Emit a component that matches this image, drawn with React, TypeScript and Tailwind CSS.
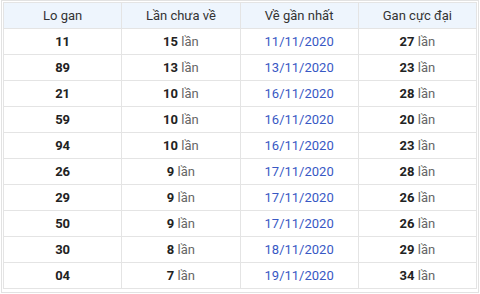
const rows = [
  { lo: "11", chua: 15, date: "11/11/2020", max: 27 },
  { lo: "89", chua: 13, date: "13/11/2020", max: 23 },
  { lo: "21", chua: 10, date: "16/11/2020", max: 28 },
  { lo: "59", chua: 10, date: "16/11/2020", max: 20 },
  { lo: "94", chua: 10, date: "16/11/2020", max: 23 },
  { lo: "26", chua: 9, date: "17/11/2020", max: 28 },
  { lo: "29", chua: 9, date: "17/11/2020", max: 26 },
  { lo: "50", chua: 9, date: "17/11/2020", max: 26 },
  { lo: "30", chua: 8, date: "18/11/2020", max: 29 },
  { lo: "04", chua: 7, date: "19/11/2020", max: 34 },
];

const Lan = ({ n }: { n: number }) => (
  <>
    <span className="font-bold text-[#222]">{n}</span>{" "}
    <span className="text-[#666]">lần</span>
  </>
);

export default function App() {
  return (
    <div className="w-[480px] h-[294px] bg-white overflow-hidden font-['Roboto',sans-serif] text-[13px]">
      <div className="ml-[1px] w-[478px] h-[293px] border border-[#e2e2e2] px-[1px] pt-[1px]">
        <table className="w-[474px] border-collapse table-fixed text-center">
          <thead>
            <tr className="h-[26px] bg-[#eef5fd] text-[#333]">
              <th className="font-normal border border-[#e4e4e4]">Lo gan</th>
              <th className="font-normal border border-[#e4e4e4]">Lần chưa về</th>
              <th className="font-normal border border-[#e4e4e4]">Về gần nhất</th>
              <th className="font-normal border border-[#e4e4e4]">Gan cực đại</th>
            </tr>
          </thead>
          <tbody>
            {rows.map((r) => (
              <tr key={r.lo} className="h-[26px]">
                <td className="border border-[#e4e4e4] font-bold text-[#222]">{r.lo}</td>
                <td className="border border-[#e4e4e4]">
                  <Lan n={r.chua} />
                </td>
                <td className="border border-[#e4e4e4] text-[#3858c4]">{r.date}</td>
                <td className="border border-[#e4e4e4]">
                  <Lan n={r.max} />
                </td>
              </tr>
            ))}
          </tbody>
        </table>
      </div>
    </div>
  );
}
